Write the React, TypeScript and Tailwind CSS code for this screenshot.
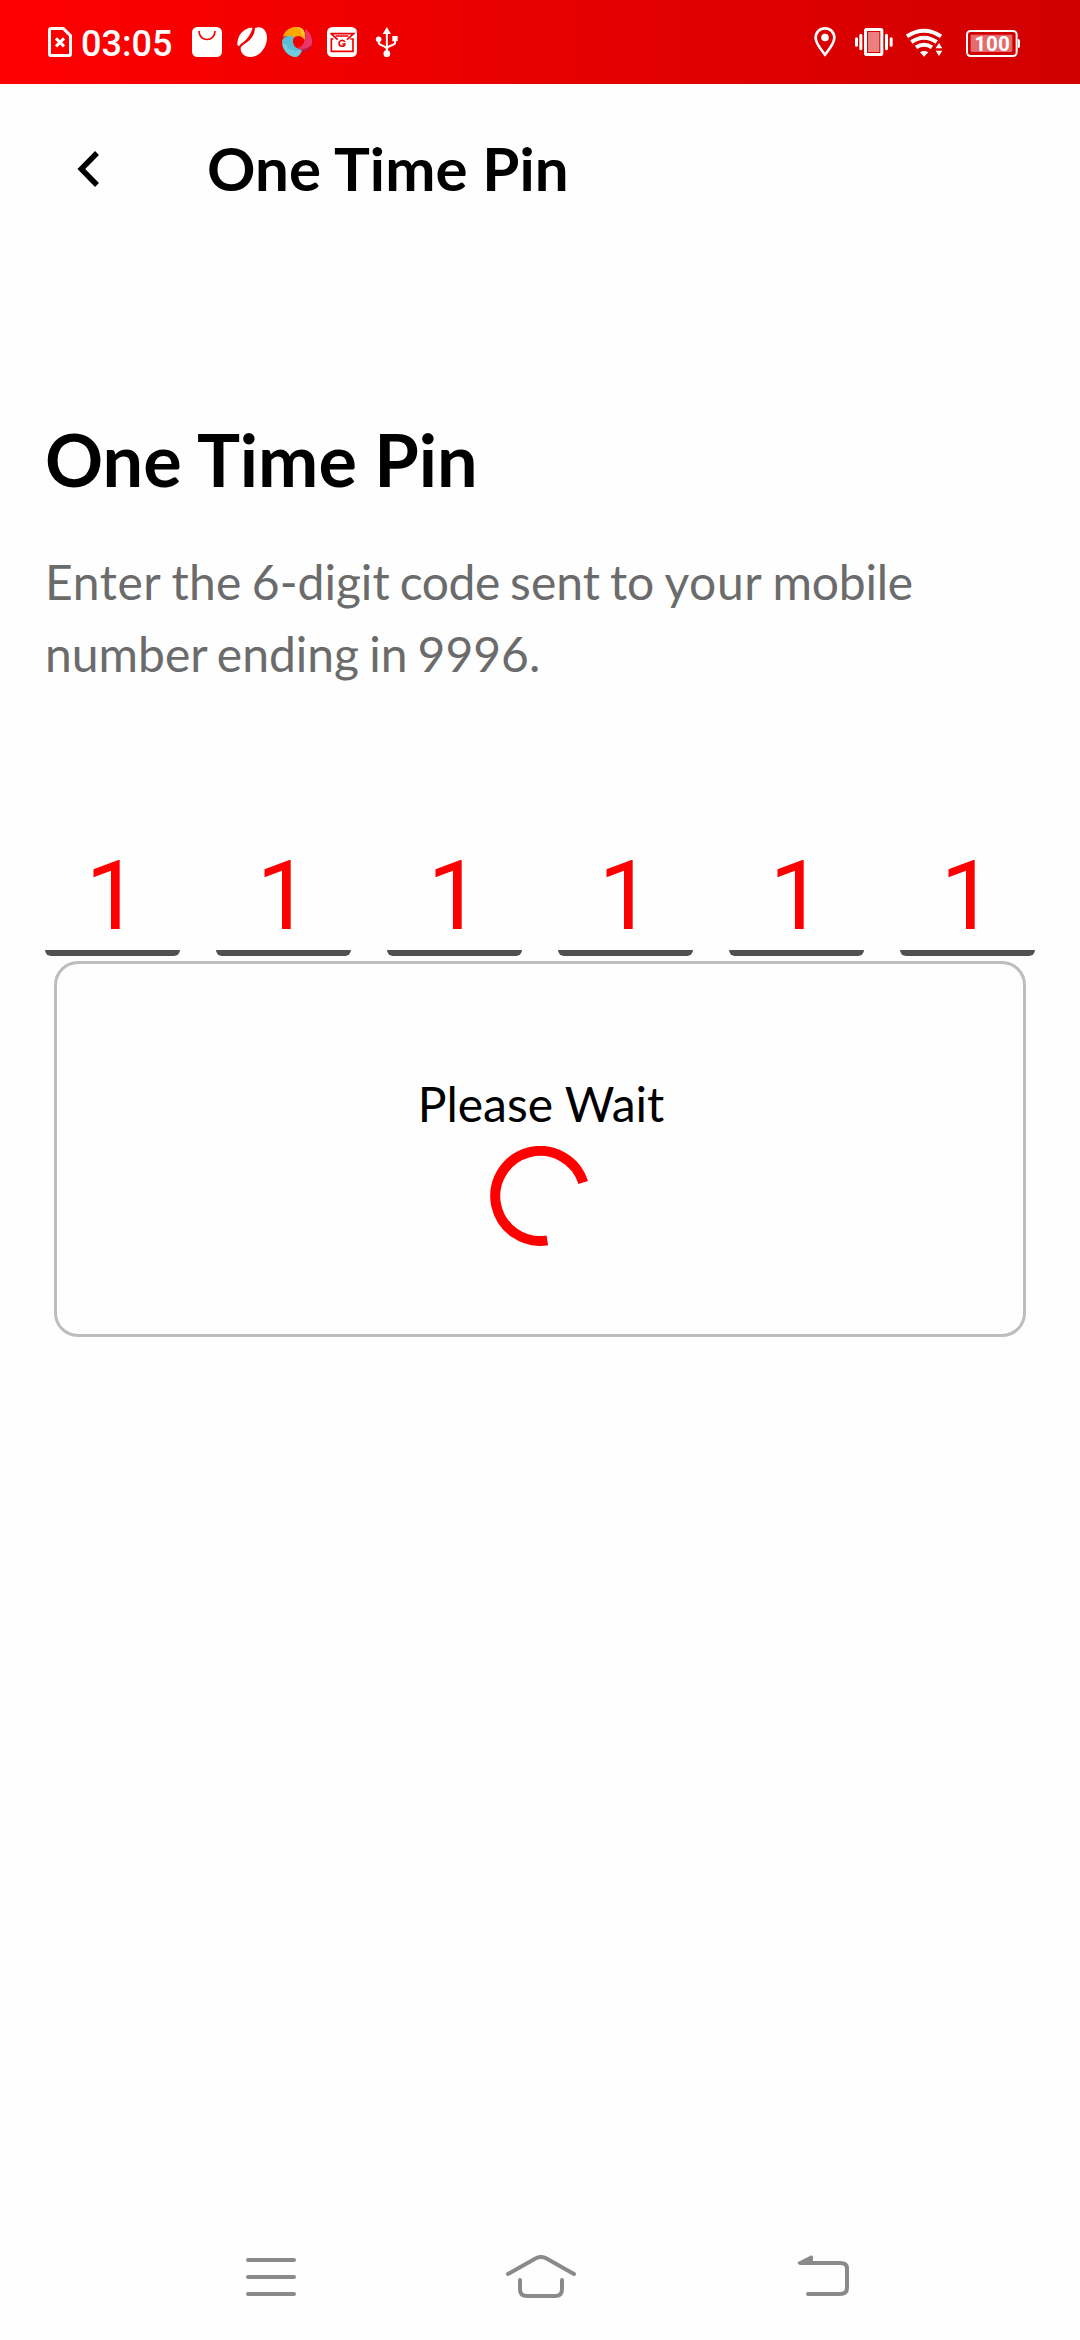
import React from "react";

const digits = ["1", "1", "1", "1", "1", "1"];

function StatusBar() {
  return (
    <header className="flex h-[84px] shrink-0 items-center bg-linear-to-r from-[#ff0000] to-[#d00000] pr-[60px] pl-12 text-white">
      <svg className="h-[30px] w-6" viewBox="54 51 72 90" fill="none" stroke="currentColor">
        <path d="M63 55.500H100L121.500 77V131Q121.500 136.500 116 136.500H64Q58.500 136.500 58.500 131V61Q58.500 55.500 64 55.500Z" strokeWidth="9" />
        <path d="M78 85L102 109M102 85L78 109" strokeWidth="9" />
      </svg>
      <span className="ml-[9px] w-[91px] pt-1 font-['Roboto'] text-[36px] leading-[42px] font-medium">03:05</span>
      <svg className="ml-5 h-[30px] w-[30px]" viewBox="36 51 90 90">
        <rect x="36" y="51" width="90" height="90" rx="16" fill="#fff" />
        <path d="M57 63C57 97 105 97 105 63" fill="none" stroke="#f80000" strokeWidth="5" />
      </svg>
      <svg className="ml-[15px] h-[30px] w-[30px]" viewBox="171 51 90 90" fill="#fff">
        <path d="M218 53C193 51 171 76 172 103C173 107 175 110 178 107C187 95 207 91 218 53Z" />
        <path d="M225 54C246 46 261 61 261 83C261 114 237 141 210 141C193 141 181 130 182 113C191 98 222 94 225 54Z" />
      </svg>
      <svg className="ml-[15px] h-[30px] w-[30px]" viewBox="81 36 90 90">
        <path d="M84 66C88 46 108 34 128 36C144 37 153 50 149 76C142 62 126 58 115 70C104 61 92 61 84 66Z" fill="#ffa800" />
        <path d="M127 36C145 37 153 50 149 74C147 66 143 61 138 58C140 49 136 41 127 36Z" fill="#ffc02a" />
        <path d="M150 41C169 53 174 74 170 91C159 107 136 114 120 99C136 98 146 92 149 74C152 62 152 52 150 41Z" fill="#e8356a" />
        <path d="M170 91C161 112 137 119 118 100C133 108 152 104 170 91Z" fill="#b91645" />
        <path d="M81 77C87 62 102 60 118 66C108 80 116 101 140 105C139 115 132 122 124 126C101 126 81 104 81 77Z" fill="#58bdd5" />
        <path d="M82 88C90 84 98 88 98 99C110 108 125 109 140 105C139 115 132 122 124 126C103 126 84 108 82 88Z" fill="#71cbdd" />
      </svg>
      <svg className="ml-[15px] h-[30px] w-[30px]" viewBox="216 36 90 90" fill="none">
        <rect x="216" y="36" width="90" height="90" rx="16" fill="#fff" />
        <path d="M235 72H229V109H294V72H286" stroke="#ef0000" strokeWidth="5" />
        <path d="M226 56H296L276 74M228 56L248 74M242 63H280" stroke="#ef0000" strokeWidth="5" />
        <path d="M270 80C262 72 251 78 252 86C253 96 268 97 270 87H262" stroke="#ef0000" strokeWidth="4.500" />
      </svg>
      <svg className="ml-[18px] h-[30px] w-6" viewBox="585 51 72 90" fill="#fff">
        <path d="M620.500 51L633 72H608ZM637 78H653V94H637Z" />
        <circle cx="596" cy="88" r="8.500" />
        <circle cx="620.500" cy="131" r="10" />
        <path d="M620.500 68V130M596 88V97C596 109 620 105 620.500 119M645 90V99C645 108 621 103 620.500 119" fill="none" stroke="#fff" strokeWidth="6" />
      </svg>

      <svg className="ml-auto h-[30px] w-[22px]" viewBox="72 51 66 90">
        <path d="M105 55C121 55 133 67 133 84C133 100 116 120 105 134C94 120 77 100 77 84C77 67 89 55 105 55Z" fill="none" stroke="#fff" strokeWidth="8" />
        <circle cx="105" cy="82.500" r="11.500" fill="#fff" />
      </svg>
      <svg className="ml-[19px] h-[30px] w-[38px]" viewBox="195 51 114 90" fill="none" stroke="#fff">
        <rect x="226.500" y="58.500" width="49" height="75" rx="3" strokeWidth="9" />
        <rect x="234" y="66" width="34" height="60" fill="#fff" fillOpacity=".5" stroke="none" />
        <path d="M199.500 86V106M212.500 76V116M289.500 76V116M303.500 86V106" strokeWidth="9" strokeLinecap="round" />
      </svg>
      <svg className="ml-[13px] h-[30px] w-[37px]" viewBox="348 51 111 90" fill="none" stroke="#fff">
        <path d="M351 79Q402 46 453 79M364 96Q402 70 440 96M378 112Q402 96 426 112" strokeWidth="12" />
        <path d="M390 127Q402 119 415 127L402 140ZM447 99L457 115H437ZM437 122H457L447 138Z" fill="#fff" stroke="none" />
      </svg>
      <svg className="ml-[23px] h-[30px] w-[54px]" viewBox="528 51 162 90">
        <rect x="531" y="63" width="149" height="75" rx="11" fill="none" stroke="#fff" strokeWidth="6" />
        <rect x="542" y="74" width="125" height="52" rx="4" fill="#fff" fillOpacity=".42" />
        <path d="M684 87Q690 87 690 92V109Q690 114 684 114Z" fill="#fff" />
        <text x="606" y="123" textAnchor="middle" fontFamily="Roboto" fontWeight="700" fontSize="62" fill="#fff">100</text>
      </svg>
    </header>
  );
}

function NavigationBar() {
  return (
    <nav className="mt-auto flex h-[126px] shrink-0 items-center pl-[246px] text-[#8a8a8a]">
      <svg className="h-[44px] w-[52px]" viewBox="0 0 52 44" fill="none" stroke="currentColor" strokeWidth="4" strokeLinecap="round">
        <path d="M2 5H48M2 22H48M2 39H48" />
      </svg>
      <svg className="ml-[207px] h-[44px] w-[72px]" viewBox="505 2255 72 44" fill="none" stroke="currentColor" strokeWidth="4" strokeLinecap="round">
        <path d="M508 2274L535.500 2258.500Q541 2255.500 546.500 2258.500L574 2274" />
        <path d="M520 2280V2289.500Q520 2296 527 2296H555Q562 2296 562 2289.500V2280" />
      </svg>
      <svg className="ml-[220px] h-[44px] w-[54px]" viewBox="797 2255 54 44" fill="none" stroke="currentColor" strokeWidth="4" strokeLinecap="round">
        <path d="M801 2263H840Q847 2263 847 2268V2288Q847 2294 840 2294H808" />
        <path d="M798 2262L811 2255.500Q813 2255 813 2257V2265H800Q796.500 2264 798 2262Z" fill="currentColor" stroke="none" />
      </svg>
    </nav>
  );
}

export default function App() {
  return (
    <div className="flex h-[2340px] w-[1080px] flex-col overflow-hidden bg-[#fefefe] font-['Lato',sans-serif] text-black">
      <StatusBar />
      <div className="flex h-[168px] shrink-0 items-center pl-[77px]">
        <button aria-label="Back" className="h-10 w-6">
          <svg className="h-10 w-6" viewBox="0 0 24 40" fill="none" stroke="currentColor" strokeWidth="5.500">
            <path d="M20 5L4.300 21L20 37" />
          </svg>
        </button>
        <h2 className="ml-[106px] text-[60px] leading-[72px] font-bold tracking-[0.1px]">One Time Pin</h2>
      </div>
      <main className="flex flex-col px-[45px] pt-[164px]">
        <h1 className="text-[72px] leading-[86px] font-bold">One Time Pin</h1>
        <p className="mt-[44px] w-[960px] text-[48px] leading-[72px] [word-spacing:-2.2px] text-[#6b6b6b]">
          <span className="tracking-[0.6px]">Enter</span> <span className="tracking-[0.3px]">the</span> 6-digit{" "}
          <span className="tracking-[-0.4px]">code</span> sent to <span className="tracking-[0.6px]">your</span>{" "}
          <span className="tracking-[-0.2px]">mobile</span> number ending in 9996.
        </p>
        <div className="mt-[142px] flex gap-9">
          {digits.map((digit, index) => (
            <div
              key={index}
              className="h-[124px] w-[135px] overflow-hidden rounded-b-[6px] border-b-[6px] border-[#505050] text-center font-['Roboto'] text-[96px] leading-[128px] text-[#ff0000]"
            >
              {digit}
            </div>
          ))}
        </div>
        <section className="mx-[9px] mt-[5px] flex h-[376px] flex-col items-center rounded-[24px] border-[3px] border-[#bdbdbd]">
          <p className="mt-[111px] pl-[2px] text-[48px] leading-[58px]">Please Wait</p>
          <svg className="mt-[13px] h-[100px] w-[100px]" viewBox="0 0 100 100" fill="none">
            <path d="M57.300 94.400A45 45 0 1 1 93.200 36.500" stroke="#ff0000" strokeWidth="10" />
          </svg>
        </section>
      </main>
      <NavigationBar />
    </div>
  );
}
